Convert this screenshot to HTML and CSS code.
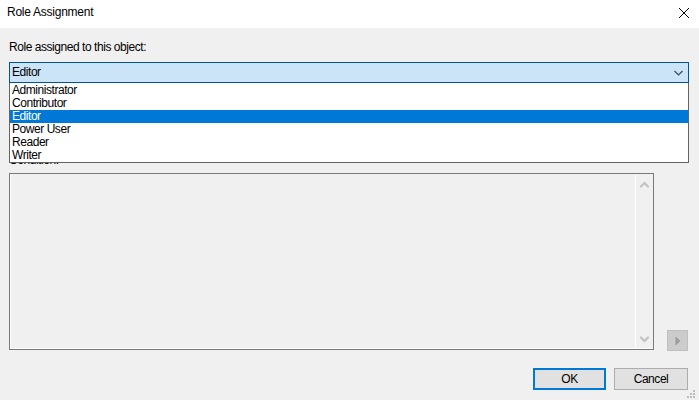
FILE: index.html
```html
<!DOCTYPE html>
<html>
<head>
<meta charset="utf-8">
<link rel="stylesheet" href="styles.css">
</head>
<body>
<div class="window">
  <div class="titlebar">
    <span class="title">Role Assignment</span>
    <svg class="close" width="12" height="12" viewBox="0 0 12 12"><path d="M1 1 L11 11 M11 1 L1 11" stroke="#000" stroke-width="1" fill="none"/></svg>
  </div>
  <div class="content">
    <div class="label">Role assigned to this object:</div>
    <div class="combo-wrap">
      <div class="combo">
        <span class="combo-text">Editor</span>
        <svg class="combo-arrow" width="9" height="6" viewBox="0 0 9 6"><path d="M0.5 1 L4.5 5 L8.5 1" stroke="#3c4a5a" stroke-width="1.2" fill="none"/></svg>
      </div>
      <ul class="list">
        <li>Administrator</li>
        <li>Contributor</li>
        <li class="selected">Editor</li>
        <li>Power User</li>
        <li>Reader</li>
        <li>Writer</li>
      </ul>
    </div>
    <div class="label cond">Condition:</div>
    <div class="edit-row">
      <div class="edit">
        <div class="edit-area"></div>
        <div class="scrollbar">
          <svg width="9" height="7" viewBox="0 0 9 7"><path d="M0 5 L4.5 0.5 L9 5 L9 6.5 L7.5 6.5 L4.5 3.5 L1.5 6.5 L0 6.5 Z" fill="#c2c2c2"/></svg>
          <svg width="9" height="7" viewBox="0 0 9 7"><path d="M0 2 L4.5 6.5 L9 2 L9 0.5 L7.5 0.5 L4.5 3.5 L1.5 0.5 L0 0.5 Z" fill="#c2c2c2"/></svg>
        </div>
      </div>
      <div class="side-btn">
        <svg width="6" height="10" viewBox="0 0 6 10"><path d="M0.5 0.5 L5.5 5 L0.5 9.5 Z" fill="#9c9c9c"/></svg>
      </div>
    </div>
    <div class="buttons">
      <div class="btn default">OK</div>
      <div class="btn">Cancel</div>
    </div>
  </div>
  <svg class="grip" width="9" height="9" viewBox="0 0 9 9">
    <rect x="6" y="0" width="2" height="2" fill="#bdbdbd"/>
    <rect x="3" y="3" width="2" height="2" fill="#bdbdbd"/>
    <rect x="6" y="3" width="2" height="2" fill="#bdbdbd"/>
    <rect x="0" y="6" width="2" height="2" fill="#bdbdbd"/>
    <rect x="3" y="6" width="2" height="2" fill="#bdbdbd"/>
    <rect x="6" y="6" width="2" height="2" fill="#bdbdbd"/>
  </svg>
</div>
</body>
</html>
```
FILE: styles.css
```css
html, body {
  margin: 0;
  padding: 0;
}
body {
  width: 699px;
  height: 400px;
  overflow: hidden;
  background: #f0f0f0;
  font-family: "Liberation Sans", Arial, sans-serif;
  font-size: 12px;
  letter-spacing: -0.45px;
  color: #000;
}
.window {
  position: relative;
  width: 699px;
  height: 400px;
}
.titlebar {
  height: 28px;
  background: #fff;
  display: flex;
  align-items: flex-start;
  justify-content: space-between;
  box-sizing: border-box;
  padding: 5px 9px 0 7px;
  line-height: 15px;
}
.title {
  letter-spacing: -0.25px;
}
.close {
  margin-top: 2px;
}
.content {
  padding: 12px 10px 0 9px;
}
.label {
  line-height: 15px;
  height: 15px;
}
.combo-wrap {
  position: relative;
  margin-top: 7px;
  z-index: 2;
}
.combo {
  height: 21px;
  box-sizing: border-box;
  border: 1px solid #005499;
  background: #cce4f7;
  display: flex;
  align-items: center;
  justify-content: space-between;
  padding: 0 5px 0 2px;
  line-height: 19px;
}
.combo-arrow {
  margin-top: 1px;
}
.list {
  position: absolute;
  left: 0;
  right: 0;
  top: 21px;
  margin: 0;
  padding: 1px 0 0 0;
  list-style: none;
  background: #fff;
  border: 1px solid #646464;
  border-top: none;
}
.list li {
  height: 13px;
  line-height: 13px;
  padding-left: 2px;
}
.list li.selected {
  background: #0078d7;
  color: #fff;
}
.cond {
  margin-top: 70px;
}
.edit-row {
  display: flex;
  align-items: flex-end;
  margin-top: 5px;
}
.edit {
  width: 645px;
  height: 177px;
  box-sizing: border-box;
  border: 1px solid #7a7a7a;
  box-shadow: inset 1px -1px 0 #fff;
  display: flex;
}
.edit-area {
  flex: 1;
}
.scrollbar {
  width: 17px;
  border-left: 1px solid #fff;
  display: flex;
  flex-direction: column;
  justify-content: space-between;
  align-items: center;
  padding: 7px 0 6px;
}
.scrollbar svg {
  display: block;
}
.side-btn {
  width: 21px;
  height: 21px;
  box-sizing: border-box;
  margin-left: 13px;
  margin-bottom: -1px;
  background: #cccccc;
  border: 1px solid #bfbfbf;
  display: flex;
  align-items: center;
  justify-content: center;
}
.side-btn svg {
  display: block;
  margin-left: 1px;
}
.buttons {
  display: flex;
  justify-content: flex-end;
  gap: 8px;
  margin-top: 18px;
  padding-right: 1px;
}
.btn {
  width: 74px;
  height: 22px;
  box-sizing: border-box;
  border: 1px solid #adadad;
  background: #e1e1e1;
  display: flex;
  align-items: center;
  justify-content: center;
  line-height: 15px;
}
.btn.default {
  width: 73px;
  border: 2px solid #0078d7;
}
.grip {
  position: absolute;
  right: 3px;
  bottom: 1px;
}
```
